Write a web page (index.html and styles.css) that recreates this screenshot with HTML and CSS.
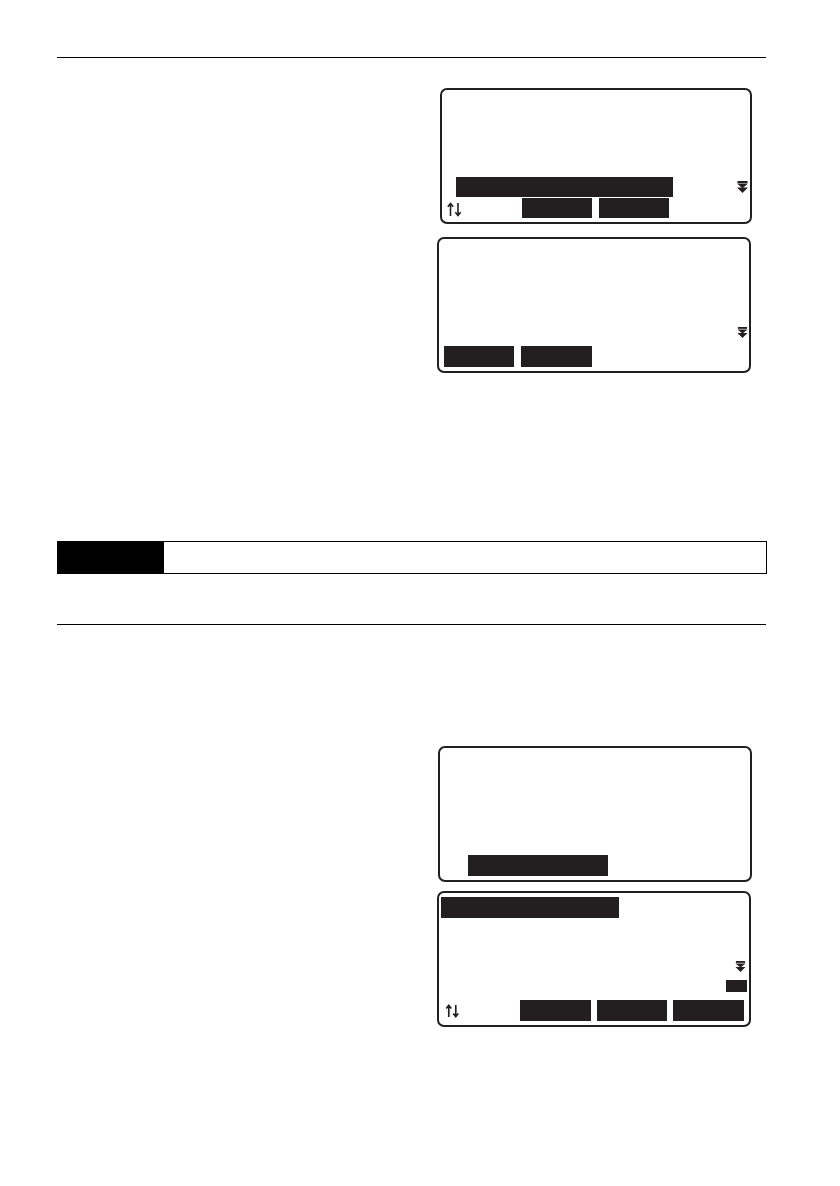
FILE: index.html
```html
<!DOCTYPE html>
<html lang="en">
<head>
<meta charset="utf-8">
<title>Manual page</title>
<link rel="stylesheet" href="styles.css">
</head>
<body>
<div class="page">
  <div class="rule"></div>

  <div class="screen s1">
    <div class="row r1a">
      <div class="bar bar1"></div>
      <svg class="more m1" viewBox="0 0 11 12" width="11" height="12"><rect x="0.5" y="0" width="10" height="2"/><polygon points="0,2.6 11,2.6 5.5,7.2"/><polygon points="0,6.6 11,6.6 5.5,12"/></svg>
    </div>
    <div class="row r1b">
      <svg class="updown ud1" viewBox="0 0 15 15" width="15" height="15"><path d="M3.5 14V2M0.8 4.8L3.5 1.5L6.2 4.8M11 1V13M8.3 10.2L11 13.5L13.7 10.2" fill="none" stroke="#231f20" stroke-width="1.6"/></svg>
      <div class="key k1a"></div>
      <div class="key k1b"></div>
    </div>
  </div>

  <div class="screen s2">
    <div class="row r2a">
      <svg class="more m2" viewBox="0 0 11 12" width="11" height="11"><rect x="0.5" y="0" width="10" height="2"/><polygon points="0,2.6 11,2.6 5.5,7.2"/><polygon points="0,6.6 11,6.6 5.5,12"/></svg>
    </div>
    <div class="row r2b">
      <div class="key k2a"></div>
      <div class="key k2b"></div>
    </div>
  </div>

  <div class="note">
    <div class="note-head"></div>
    <div class="note-body"></div>
  </div>

  <div class="rule rule2"></div>

  <div class="screen s3">
    <div class="row r3a">
      <div class="bar bar3"></div>
    </div>
  </div>

  <div class="screen s4">
    <div class="row r4top">
      <div class="bar bar4"></div>
    </div>
    <div class="row r4a">
      <svg class="more m4" viewBox="0 0 11 12" width="11" height="11"><rect x="0.5" y="0" width="10" height="2"/><polygon points="0,2.6 11,2.6 5.5,7.2"/><polygon points="0,6.6 11,6.6 5.5,12"/></svg>
    </div>
    <div class="row r4b">
      <div class="tag"></div>
    </div>
    <div class="row r4c">
      <svg class="updown ud4" viewBox="0 0 15 15" width="15" height="14"><path d="M3.5 14V2M0.8 4.8L3.5 1.5L6.2 4.8M11 1V13M8.3 10.2L11 13.5L13.7 10.2" fill="none" stroke="#231f20" stroke-width="1.8"/></svg>
      <div class="key k4a"></div>
      <div class="key k4b"></div>
      <div class="key k4c"></div>
    </div>
  </div>
</div>
</body>
</html>
```

FILE: styles.css
```css
html, body {
  margin: 0;
  padding: 0;
  background: #fff;
  font-family: "Liberation Sans", Arial, sans-serif;
}

.page {
  width: 840px;
  height: 1186px;
  box-sizing: border-box;
  padding: 57px 73px 0 57px;
  display: flex;
  flex-direction: column;
}

.rule {
  height: 0;
  border-top: 1.5px solid #000;
  margin-right: 1px;
}

.rule2 {
  margin-top: 50px;
}

.screen {
  box-sizing: border-box;
  height: 136px;
  border: 2px solid #231f20;
  border-radius: 7px;
  display: flex;
  flex-direction: column;
  justify-content: flex-end;
}

.row {
  display: flex;
  align-items: center;
}

.bar, .key, .tag {
  background: #231f20;
}

.more {
  fill: #231f20;
  margin-left: auto;
  flex: none;
}

.updown {
  flex: none;
}

/* screen 1 */
.s1 {
  width: 312px;
  margin: 30px 0 0 383px;
  padding-bottom: 4px;
}
.r1a { height: 20px; margin-bottom: 1px; }
.bar1 { width: 217px; height: 20px; margin-left: 14px; }
.m1 { margin-right: 2px; }
.r1b { height: 20px; }
.ud1 { margin-left: 5px; margin-top: 2px; }
.key { height: 20px; width: 70px; }
.k1a { margin-left: 60px; }
.k1b { margin-left: 7px; }

/* screen 2 */
.s2 {
  width: 314px;
  margin: 13px 0 0 380px;
  padding-bottom: 4px;
}
.r2a { height: 11px; margin-bottom: 8px; }
.m2 { margin-right: 1px; }
.r2b { height: 21px; }
.k2a { height: 21px; margin-left: 5px; }
.k2b { height: 21px; width: 71px; margin-left: 7px; }

/* note table */
.note {
  margin-top: 168px;
  height: 33px;
  box-sizing: border-box;
  border: 1.5px solid #000;
  display: flex;
}
.note-head {
  width: 106px;
  background: #000;
}
.note-body {
  flex: 1;
}

/* screen 3 */
.s3 {
  width: 314px;
  margin: 121px 0 0 381px;
  padding-bottom: 4px;
}
.r3a { height: 21px; }
.bar3 { width: 140px; height: 21px; margin-left: 28px; }

/* screen 4 */
.s4 {
  width: 314px;
  margin: 9px 0 0 380px;
  padding: 4px 0 4px 0;
  justify-content: flex-start;
}
.r4top { height: 21px; }
.bar4 { width: 178px; height: 21px; margin-left: 2px; }
.r4a { height: 11px; margin-top: auto; margin-bottom: 8px; }
.m4 { margin-right: 3px; }
.r4b { height: 12px; margin-bottom: 8px; justify-content: flex-end; }
.tag { width: 21px; height: 12px; margin-right: 2px; }
.r4c { height: 21px; }
.ud4 { margin-left: 6px; margin-top: 1px; }
.k4a { height: 21px; width: 71px; margin-left: 60px; }
.k4b { height: 21px; width: 70px; margin-left: 6px; }
.k4c { height: 21px; width: 71px; margin-left: 6px; }
```
